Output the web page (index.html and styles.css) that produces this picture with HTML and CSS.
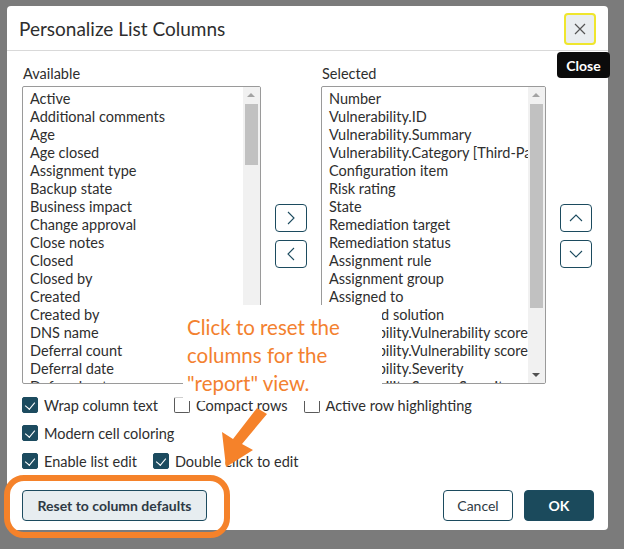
FILE: index.html
```html
<!DOCTYPE html>
<html lang="en">
<head>
    <meta charset="UTF-8">
    <title>Personalize List Columns</title>
    <link rel="stylesheet" href="styles.css">
</head>
<body>
    <div class="modal">
        <div class="modal-header">
            <h2 class="modal-title">Personalize List Columns</h2>
            <button class="close-btn" aria-label="Close">
                <svg width="12" height="12" viewBox="0 0 12 12"><path d="M1 1L11 11M11 1L1 11" stroke="#555" stroke-width="1.2" fill="none"/></svg>
            </button>
        </div>
        <div class="tooltip">Close</div>

        <div class="modal-body">
            <div class="columns">
                <div class="col col-available">
                    <div class="col-label">Available</div>
                    <div class="listbox">
                        <div class="items">
                            <div>Active</div>
                            <div>Additional comments</div>
                            <div>Age</div>
                            <div>Age closed</div>
                            <div>Assignment type</div>
                            <div>Backup state</div>
                            <div>Business impact</div>
                            <div>Change approval</div>
                            <div>Close notes</div>
                            <div>Closed</div>
                            <div>Closed by</div>
                            <div>Created</div>
                            <div>Created by</div>
                            <div>DNS name</div>
                            <div>Deferral count</div>
                            <div>Deferral date</div>
                            <div>Deferral notes</div>
                        </div>
                        <div class="scrollbar">
                            <div class="sb-up"></div>
                            <div class="sb-thumb thumb-short"></div>
                            <div class="sb-space"></div>
                            <div class="sb-down"></div>
                        </div>
                    </div>
                </div>

                <div class="move-btns">
                    <button class="icon-btn"><svg width="10" height="14" viewBox="0 0 10 14"><path d="M2 1L8 7L2 13" stroke="#1c4b5f" stroke-width="1.1" fill="none"/></svg></button>
                    <button class="icon-btn"><svg width="10" height="14" viewBox="0 0 10 14"><path d="M8 1L2 7L8 13" stroke="#1c4b5f" stroke-width="1.1" fill="none"/></svg></button>
                </div>

                <div class="col col-selected">
                    <div class="col-label">Selected</div>
                    <div class="listbox">
                        <div class="items">
                            <div>Number</div>
                            <div>Vulnerability.ID</div>
                            <div>Vulnerability.Summary</div>
                            <div>Vulnerability.Category [Third-Party]</div>
                            <div>Configuration item</div>
                            <div>Risk rating</div>
                            <div>State</div>
                            <div>Remediation target</div>
                            <div>Remediation status</div>
                            <div>Assignment rule</div>
                            <div>Assignment group</div>
                            <div>Assigned to</div>
                            <div>Proposed solution</div>
                            <div>Vulnerability.Vulnerability score (v3)</div>
                            <div>Vulnerability.Vulnerability score (v2)</div>
                            <div>Vulnerability.Severity</div>
                            <div>Vulnerability.Source Severity</div>
                        </div>
                        <div class="scrollbar">
                            <div class="sb-up"></div>
                            <div class="sb-thumb thumb-long"></div>
                            <div class="sb-space"></div>
                            <div class="sb-down"></div>
                        </div>
                    </div>
                </div>

                <div class="move-btns">
                    <button class="icon-btn"><svg width="14" height="10" viewBox="0 0 14 10"><path d="M1 8L7 2L13 8" stroke="#1c4b5f" stroke-width="1.1" fill="none"/></svg></button>
                    <button class="icon-btn"><svg width="14" height="10" viewBox="0 0 14 10"><path d="M1 2L7 8L13 2" stroke="#1c4b5f" stroke-width="1.1" fill="none"/></svg></button>
                </div>
            </div>

            <div class="options">
                <div class="opt-row">
                    <label class="opt"><span class="cb checked"></span>Wrap column text</label>
                    <label class="opt"><span class="cb"></span>Compact rows</label>
                    <label class="opt"><span class="cb"></span>Active row highlighting</label>
                </div>
                <div class="opt-row">
                    <label class="opt"><span class="cb checked"></span>Modern cell coloring</label>
                </div>
                <div class="opt-row">
                    <label class="opt"><span class="cb checked"></span>Enable list edit</label>
                    <label class="opt"><span class="cb checked"></span>Double click to edit</label>
                </div>
            </div>
        </div>

        <div class="modal-footer">
            <button class="btn btn-reset">Reset to column defaults</button>
            <div class="footer-right">
                <button class="btn btn-cancel">Cancel</button>
                <button class="btn btn-ok">OK</button>
            </div>
        </div>

        <!-- annotation overlay -->
        <div class="note">Click to reset the<br>columns for the<br>"report" view.</div>
        <div class="ring"></div>
        <svg class="arrow" width="624" height="549" viewBox="0 0 624 549">
            <polygon fill="#f5822a" points="267,414 257,408 233,439 222,432 226,467 253,450 242,444"/>
        </svg>
    </div>
</body>
</html>
```

FILE: styles.css
```css
body {
    margin: 0;
    background: #7b7b7b;
    font-family: Lato, "Open Sans", sans-serif;
    color: #2e2e2e;
    width: 624px;
    height: 549px;
    overflow: hidden;
}
button {
    font-family: inherit;
    cursor: pointer;
}
.modal {
    position: relative;
    margin: 6px 0 0 7px;
    width: 601px;
    height: 524px;
    background: #fff;
    border-radius: 4px;
    display: flex;
    flex-direction: column;
}
.modal-header {
    height: 44px;
    border-bottom: 1px solid #d9d9d9;
    display: flex;
    align-items: center;
    justify-content: space-between;
    padding: 0 12px;
}
.modal-title {
    margin: 0;
    font-size: 19px;
    font-weight: 400;
    color: #2e2e2e;
    padding-top: 1px;
}
.close-btn {
    width: 32px;
    height: 32px;
    background: #e9edf0;
    border: 2px solid #efe62e;
    border-radius: 4px;
    display: flex;
    align-items: center;
    justify-content: center;
    padding: 0;
    margin-top: 2px;
}
.tooltip {
    position: absolute;
    left: 550px;
    top: 46px;
    width: 53px;
    height: 26px;
    background: #0b0b0b;
    color: #fff;
    font-size: 14px;
    font-weight: 700;
    border-radius: 4px;
    display: flex;
    align-items: center;
    justify-content: center;
}
.modal-body {
    padding: 15px 16px 0 15px;
}
.columns {
    display: flex;
    align-items: flex-end;
    gap: 14px;
}
.col, .move-btns {
    flex-shrink: 0;
}
.col-label {
    font-size: 14.5px;
    line-height: 16px;
    margin-bottom: 4px;
    padding-left: 1px;
}
.col-available { width: 239px; }
.col-selected { width: 225px; }
.listbox {
    height: 296px;
    border: 1px solid #9a9a9a;
    border-radius: 2px;
    display: flex;
    overflow: hidden;
}
.items {
    flex: 1;
    overflow: hidden;
    padding: 3px 0 0 7px;
    font-size: 14.5px;
    line-height: 18px;
    white-space: nowrap;
}
.scrollbar {
    width: 17px;
    flex-shrink: 0;
    background: #f1f1f1;
    display: flex;
    flex-direction: column;
}
.sb-up, .sb-down {
    height: 17px;
    position: relative;
}
.sb-up::after, .sb-down::after {
    content: "";
    position: absolute;
    left: 4px;
    border-left: 4px solid transparent;
    border-right: 4px solid transparent;
}
.sb-up::after {
    top: 6px;
    border-bottom: 4px solid #a3a3a3;
}
.sb-down::after {
    top: 7px;
    border-top: 4px solid #505050;
}
.sb-thumb {
    margin: 0 2px;
    background: #c1c1c1;
}
.thumb-short { height: 61px; }
.thumb-long { height: 204px; }
.sb-space { flex: 1; }
.move-btns {
    width: 32px;
    height: 297px;
    display: flex;
    flex-direction: column;
    justify-content: center;
    gap: 8px;
}
.icon-btn {
    width: 32px;
    height: 28px;
    background: #fff;
    border: 1px solid #1c4b5f;
    border-radius: 4px;
    padding: 0;
    display: flex;
    align-items: center;
    justify-content: center;
}
.options {
    margin-top: 7px;
}
.opt-row {
    height: 28px;
    display: flex;
    align-items: center;
}
.opt {
    display: flex;
    align-items: center;
    font-size: 14.5px;
    margin-right: 16px;
}
.cb {
    width: 16px;
    height: 16px;
    box-sizing: border-box;
    border: 1px solid #5a5a5a;
    border-top-color: #cfcfcf;
    border-radius: 2px;
    margin-right: 6px;
    position: relative;
}
.cb.checked {
    background: #1c4b5f;
    border-color: #1c4b5f;
}
.cb.checked::after {
    content: "";
    position: absolute;
    left: 4px;
    top: 2px;
    width: 5px;
    height: 8px;
    border-right: 1.5px solid #fff;
    border-bottom: 1.5px solid #fff;
    transform: rotate(40deg);
}
.modal-footer {
    margin-top: auto;
    padding: 0 14px 9px 15px;
    display: flex;
    justify-content: space-between;
}
.btn {
    height: 31px;
    border-radius: 4px;
    font-size: 14px;
    font-weight: 700;
    border: 1px solid #1c4b5f;
    padding: 0;
}
.btn-reset {
    width: 185px;
    background: #e7edf0;
    color: #2e3a45;
}
.footer-right {
    display: flex;
    gap: 11px;
}
.btn-cancel {
    width: 70px;
    background: #fff;
    color: #2e3a45;
    font-weight: 400;
}
.btn-ok {
    width: 70px;
    background: #1b4a5c;
    color: #fff;
}
.note {
    position: absolute;
    left: 176px;
    top: 299px;
    width: 195px;
    height: 88px;
    background: #fff;
    padding: 8px 0 0 4px;
    font-size: 20.5px;
    line-height: 28px;
    color: #f3812f;
    white-space: nowrap;
}
.ring {
    position: absolute;
    left: -3px;
    top: 469px;
    width: 214px;
    height: 51px;
    border: 6px solid #f5822a;
    border-radius: 20px;
    pointer-events: none;
}
.arrow {
    position: absolute;
    left: -7px;
    top: -6px;
    pointer-events: none;
}
```
